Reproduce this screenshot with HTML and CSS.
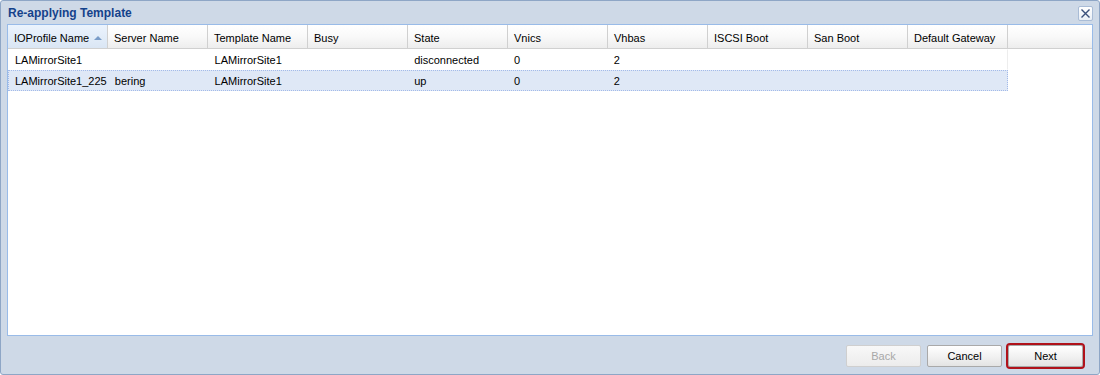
FILE: index.html
```html
<!DOCTYPE html>
<html lang="en">
  <head>
    <meta charset="UTF-8" />
    <title>Re-applying Template</title>
    <link rel="stylesheet" href="styles.css">
  </head>
  <body>
    <div class="window">
      <div class="title-bar">
        <span class="title">Re-applying Template</span>
        <span class="close">
          <svg width="11" height="11" viewBox="0 0 11 11">
            <path d="M1.5 1.5 L9.5 9.5 M9.5 1.5 L1.5 9.5" stroke="#3a4f7a" stroke-width="1.4" fill="none" />
          </svg>
        </span>
      </div>
      <div class="grid">
        <div class="head">
          <div class="cell sorted">IOProfile Name <span class="arrow"></span></div>
          <div class="cell">Server Name</div>
          <div class="cell">Template Name</div>
          <div class="cell">Busy</div>
          <div class="cell">State</div>
          <div class="cell">Vnics</div>
          <div class="cell">Vhbas</div>
          <div class="cell">ISCSI Boot</div>
          <div class="cell">San Boot</div>
          <div class="cell">Default Gateway</div>
          <div class="cell filler"></div>
        </div>
        <div class="row">
          <div class="cell">LAMirrorSite1</div>
          <div class="cell"></div>
          <div class="cell">LAMirrorSite1</div>
          <div class="cell"></div>
          <div class="cell">disconnected</div>
          <div class="cell">0</div>
          <div class="cell">2</div>
          <div class="cell"></div>
          <div class="cell"></div>
          <div class="cell"></div>
        </div>
        <div class="row selected">
          <div class="cell">LAMirrorSite1_225</div>
          <div class="cell">bering</div>
          <div class="cell">LAMirrorSite1</div>
          <div class="cell"></div>
          <div class="cell">up</div>
          <div class="cell">0</div>
          <div class="cell">2</div>
          <div class="cell"></div>
          <div class="cell"></div>
          <div class="cell"></div>
        </div>
      </div>
      <div class="footer">
        <button class="btn" disabled>Back</button>
        <button class="btn">Cancel</button>
        <button class="btn focus">Next</button>
      </div>
    </div>
  </body>
</html>
```

FILE: styles.css
```css
body {
  margin: 0;
  font-family: "Liberation Sans", Arial, sans-serif;
  font-size: 11px;
  color: #000;
}
.window {
  width: 1100px;
  height: 375px;
  box-sizing: border-box;
  border: 1px solid #8ea6c6;
  border-radius: 3px;
  background: #ced9e7;
  display: flex;
  flex-direction: column;
  padding: 0 6px 0 6px;
}
.title-bar {
  height: 23px;
  display: flex;
  align-items: center;
  justify-content: space-between;
}
.title {
  font-weight: bold;
  font-size: 12px;
  color: #15428b;
  padding-left: 1px;
}
.close {
  width: 15px;
  height: 15px;
  box-sizing: border-box;
  border: 1px solid #a9bcd6;
  border-radius: 2px;
  background: linear-gradient(#ffffff, #e9eef5);
  display: flex;
  align-items: center;
  justify-content: center;
  margin-top: 1px;
}
.grid {
  height: 312px;
  box-sizing: border-box;
  border: 1px solid #99bbe8;
  background: #fff;
}
.head {
  display: flex;
  height: 24px;
  box-sizing: border-box;
  border-bottom: 1px solid #d0d0d0;
  background: linear-gradient(#ffffff, #f9f9f9 50%, #ededed);
}
.head .cell {
  border-right: 1px solid #d0d0d0;
  display: flex;
  align-items: center;
  padding: 2px 6px 0 6px;
}
.head .sorted {
  background: linear-gradient(#ebf3fd, #dae6f4);
}
.head .filler {
  flex: 1;
  border-right: none;
}
.arrow {
  display: inline-block;
  width: 0;
  height: 0;
  margin-left: 5px;
  border-left: 4px solid transparent;
  border-right: 4px solid transparent;
  border-bottom: 4px solid #7a9cc8;
}
.cell {
  width: 100px;
  box-sizing: border-box;
  padding: 0 6px;
  white-space: nowrap;
  overflow: hidden;
}
.row {
  display: flex;
  width: 1000px;
  height: 21px;
  box-sizing: border-box;
  align-items: center;
  border: 1px dotted transparent;
  border-right: 1px solid #ededed;
}
.row .cell {
  padding-left: 6px;
}
.row.selected {
  background: #dfe8f6;
  border: 1px dotted #a3bae9;
}
.footer {
  flex: 1;
  display: flex;
  justify-content: flex-end;
  align-items: center;
  gap: 6px;
  padding-right: 10px;
  padding-top: 1px;
}
.btn {
  width: 75px;
  height: 22px;
  font-family: "Liberation Sans", Arial, sans-serif;
  font-size: 11px;
  color: #000;
  border: 1px solid #a9a9a9;
  border-radius: 2px;
  background: linear-gradient(#ffffff, #f2f2f2 50%, #e3e3e3);
  padding: 0;
}
.btn:disabled {
  color: #a8a8a8;
  border-color: #cfcfcf;
  background: linear-gradient(#f8f8f8, #ececec);
}
.btn.focus {
  outline: 2px solid #b0121b;
  outline-offset: 0;
}
```
